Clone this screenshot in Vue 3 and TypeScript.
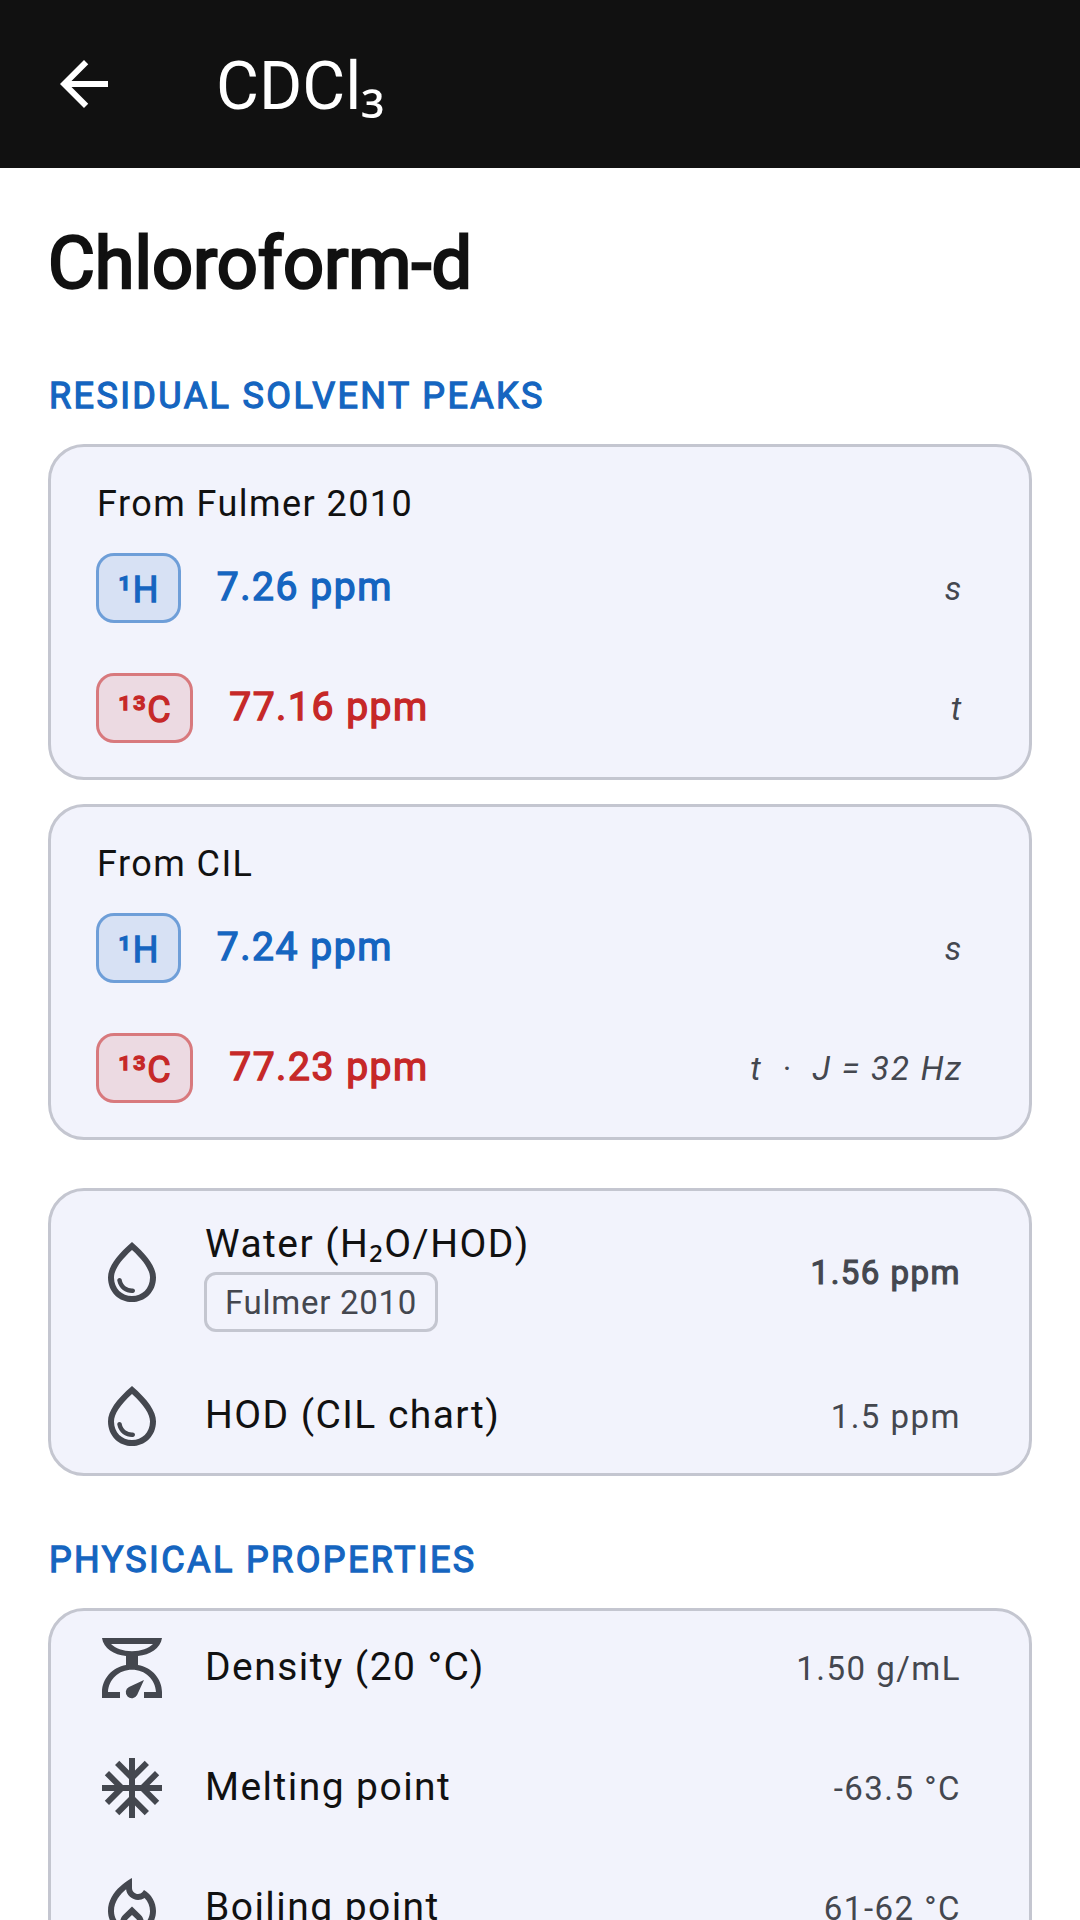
<script setup lang="ts">
interface Peak {
  nucleus: string
  kind: 'proton' | 'carbon'
  shift: string
  pattern: string
}

interface PeakSource {
  title: string
  peaks: Peak[]
}

interface Property {
  label: string
  value: string
  icon: keyof typeof icons
}

const icons = {
  drop: 'M12 2c-5.33 4.55-8 8.48-8 11.8 0 4.98 3.8 8.2 8 8.2s8-3.22 8-8.2c0-3.32-2.67-7.25-8-11.8zm0 18c-3.35 0-6-2.57-6-6.2 0-2.34 1.95-5.44 6-9.14 4.05 3.7 6 6.79 6 9.14 0 3.63-2.65 6.2-6 6.2zm-4.17-6c.37 0 .67.26.74.62.41 2.22 2.28 2.98 3.64 2.87.43-.02.79.32.79.75 0 .4-.32.73-.72.75-2.13.13-4.62-1.09-5.19-4.12-.08-.45.28-.87.74-.87z',
  scale:
    'M2 2H22C21.5 5.5 18 7.6 14 8V11C18.5 11.8 22 15.5 22 20V22H16V20H20C19.8 15.8 16.4 12.6 12 12.6S4.2 15.8 4 20H8V22H2V20C2 15.5 5.5 11.8 10 11V8C6 7.6 2.5 5.5 2 2ZM5 4C6.5 5.5 9 6.4 12 6.4S17.5 5.5 19 4ZM16 16L13.7 21A2 2 0 1 1 11 18.3Z',
  snow: 'M22 11h-4.17l3.24-3.24-1.41-1.42L15 11h-2V9l4.66-4.66-1.42-1.41L13 6.17V2h-2v4.17L7.76 2.93 6.34 4.34 11 9v2H9L4.34 6.34 2.93 7.76 6.17 11H2v2h4.17l-3.24 3.24 1.41 1.42L9 13h2v2l-4.66 4.66 1.42 1.41L11 17.83V22h2v-4.17l3.24 3.24 1.42-1.41L13 15v-2h2l4.66 4.66 1.41-1.42L17.83 13H22z',
  flame:
    'M16 6l-.44.55c-.42.52-.98.75-1.54.75C13 7.3 12 6.52 12 5.3V2S4 6 4 13c0 4.42 3.58 8 8 8s8-3.58 8-8c0-2.96-1.61-5.62-4-7zm-4 13c-1.1 0-2-.87-2-1.94 0-.51.2-.99.58-1.36L12 14.3l1.43 1.4c.37.37.57.85.57 1.36 0 1.07-.9 1.94-2 1.94zm3.96-1.5c.04-.36.22-1.89-1.13-3.22L12 11.5l-2.83 2.78C7.81 15.62 8 17.16 8.04 17.5 6.79 16.4 6 14.79 6 13c0-3.16 2.13-5.65 4.03-7.25.23 1.99 1.93 3.55 3.99 3.55.78 0 1.54-.23 2.18-.66C17.34 9.78 18 11.35 18 13c0 1.79-.79 3.4-2.04 4.5z',
}

const sources: PeakSource[] = [
  {
    title: 'From Fulmer 2010',
    peaks: [
      { nucleus: '¹H', kind: 'proton', shift: '7.26 ppm', pattern: 's' },
      { nucleus: '¹³C', kind: 'carbon', shift: '77.16 ppm', pattern: 't' },
    ],
  },
  {
    title: 'From CIL',
    peaks: [
      { nucleus: '¹H', kind: 'proton', shift: '7.24 ppm', pattern: 's' },
      { nucleus: '¹³C', kind: 'carbon', shift: '77.23 ppm', pattern: 't  ·  J = 32 Hz' },
    ],
  },
]

const properties: Property[] = [
  { label: 'Density (20 °C)', value: '1.50 g/mL', icon: 'scale' },
  { label: 'Melting point', value: '-63.5 °C', icon: 'snow' },
  { label: 'Boiling point', value: '61-62 °C', icon: 'flame' },
]
</script>

<template>
  <div class="screen">
    <header class="app-bar">
      <button class="back" type="button" aria-label="Back">
        <svg class="icon" viewBox="0 0 24 24" aria-hidden="true">
          <path d="M20 11H7.83l5.59-5.59L12 4l-8 8 8 8 1.41-1.41L7.83 13H20v-2z" />
        </svg>
      </button>
      <h1 class="formula">CDCl<span class="digit">₃</span></h1>
    </header>

    <main class="content">
      <h2 class="name strong">Chloroform-d</h2>

      <section class="section">
        <h3 class="section-title strong">RESIDUAL SOLVENT PEAKS</h3>
        <div class="sources">
          <article v-for="source in sources" :key="source.title" class="card source">
            <h4 class="source-title">{{ source.title }}</h4>
            <ul class="rows">
              <li v-for="peak in source.peaks" :key="peak.nucleus" class="peak" :class="peak.kind">
                <span class="badge strong">{{ peak.nucleus }}</span>
                <span class="shift strong">{{ peak.shift }}</span>
                <span class="pattern">{{ peak.pattern }}</span>
              </li>
            </ul>
          </article>
        </div>
        <ul class="card rows water">
          <li class="row tall">
            <svg class="icon" viewBox="0 0 24 24" aria-hidden="true"><path :d="icons.drop" /></svg>
            <div class="label-group">
              <span class="label">Water (H<span class="digit">₂</span>O/HOD)</span>
              <span class="chip">Fulmer 2010</span>
            </div>
            <span class="value strong">1.56 ppm</span>
          </li>
          <li class="row">
            <svg class="icon" viewBox="0 0 24 24" aria-hidden="true"><path :d="icons.drop" /></svg>
            <span class="label">HOD (CIL chart)</span>
            <span class="value">1.5 ppm</span>
          </li>
        </ul>
      </section>

      <section class="section">
        <h3 class="section-title strong">PHYSICAL PROPERTIES</h3>
        <ul class="card rows">
          <li v-for="item in properties" :key="item.label" class="row">
            <svg class="icon" viewBox="0 0 24 24" aria-hidden="true">
              <path fill-rule="evenodd" :d="icons[item.icon]" />
            </svg>
            <span class="label">{{ item.label }}</span>
            <span class="value">{{ item.value }}</span>
          </li>
        </ul>
      </section>
    </main>
  </div>
</template>

<style>
body {
  background: #fff;
}
</style>

<style scoped>
.screen {
  display: flex;
  flex-direction: column;
  height: 100vh;
  color: #111;
  font-family: Roboto, 'Noto Sans', sans-serif;
  font-size: 33px;
}

h1,
h2,
h3,
h4,
ul {
  margin: 0;
  padding: 0;
  font-weight: 400;
}

.digit {
  font-family: 'Noto Sans', sans-serif;
  line-height: 1;
}

.strong {
  -webkit-text-stroke: 0.035em currentColor;
}

.icon {
  display: block;
  flex: none;
  width: 72px;
  height: 72px;
  fill: currentColor;
}

.app-bar {
  display: flex;
  flex: none;
  align-items: center;
  gap: 96px;
  height: 168px;
  padding: 0 48px;
  box-sizing: border-box;
  background: #111;
  color: #fff;
}

.back {
  padding: 0;
  border: 0;
  background: none;
  color: inherit;
}

.formula {
  padding-top: 6px;
  font-size: 66px;
  line-height: 84px;
}

.content {
  flex: 1;
  min-height: 0;
  padding: 48px;
  overflow-y: auto;
  scrollbar-width: none;
}

.name {
  font-size: 72px;
  line-height: 96px;
}

.section {
  margin-top: 60px;
}

.section-title {
  margin-bottom: 24px;
  padding-left: 1px;
  color: #1565c0;
  font-size: 36px;
  line-height: 48px;
  letter-spacing: 0.066em;
}

.sources {
  display: flex;
  flex-direction: column;
  gap: 24px;
}

.card {
  box-sizing: border-box;
  border: 3px solid #c4c6d0;
  border-radius: 36px;
  background: #f2f3fc;
}

.source {
  padding: 33px 66px 9px 45px;
}

.source-title {
  padding-left: 1px;
  font-size: 36px;
  line-height: 48px;
  letter-spacing: 0.04em;
}

.rows {
  list-style: none;
}

.peak {
  display: flex;
  align-items: center;
  gap: 36px;
  height: 120px;
}

.proton {
  --tone: 21, 101, 192;
}

.carbon {
  --tone: 198, 40, 40;
}

.badge,
.shift {
  color: rgb(var(--tone));
}

.badge {
  box-sizing: border-box;
  height: 70px;
  padding: 4px 18px 0 19px;
  border: 3px solid rgba(var(--tone), 0.6);
  border-radius: 18px;
  background: rgba(var(--tone), 0.12);
  background-clip: padding-box;
  font-size: 36px;
  line-height: 60px;
  letter-spacing: 0.04em;
}

.shift {
  flex: 1;
  padding-bottom: 2px;
  font-size: 39px;
  letter-spacing: 0.04em;
}

.pattern {
  color: #44474f;
  font-style: italic;
  letter-spacing: 0.055em;
  white-space: pre;
}

.water {
  margin-top: 48px;
}

.row {
  display: flex;
  align-items: center;
  gap: 36px;
  height: 120px;
  padding: 0 68px 0 45px;
  color: #44474f;
}

.row:first-child,
.row:last-child {
  height: 117px;
}

.row:first-child .icon,
.row:first-child > span {
  margin-top: -3px;
}

.row:last-child .icon,
.row:last-child > span {
  margin-bottom: -3px;
}

.row.tall {
  height: 165px;
}

.label,
.label-group {
  flex: 1;
}

.label {
  padding-left: 1px;
  color: #111;
  font-size: 39px;
  line-height: 56px;
  letter-spacing: 0.037em;
}

.row > .label {
  padding-bottom: 2px;
}

.label-group {
  display: flex;
  flex-direction: column;
  align-items: flex-start;
}

.chip {
  box-sizing: border-box;
  height: 60px;
  padding: 0 18px;
  border: 3px solid #c4c6d0;
  border-radius: 12px;
  line-height: 56px;
  letter-spacing: 0.022em;
}

.value {
  letter-spacing: 0.045em;
}
</style>
